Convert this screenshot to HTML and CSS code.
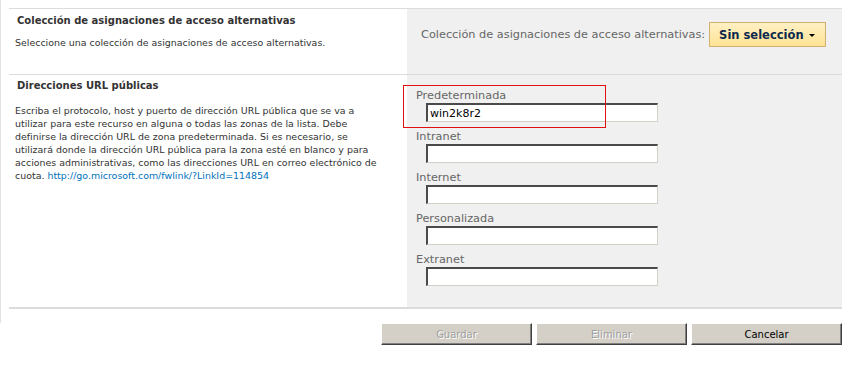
FILE: index.html
```html
<!DOCTYPE html>
<html lang="es">
<head>
  <meta charset="UTF-8">
  <title>Asignaciones de acceso alternativas</title>
  <link rel="stylesheet" href="styles.css">
</head>
<body>
  <div class="page">
    <div class="form">
      <!-- Colección -->
      <div class="section">
        <div class="desc">
          <h3>Colección de asignaciones de acceso alternativas</h3>
          <p class="first">Seleccione una colección de asignaciones de acceso alternativas.</p>
        </div>
        <div class="ctrl ctrl-top">
          <span class="ctrl-label">Colección de asignaciones de acceso alternativas:</span>
          <button class="picker">Sin selección <span class="arrow"></span></button>
        </div>
      </div>

      <!-- Direcciones URL -->
      <div class="section last">
        <div class="desc">
          <h3>Direcciones URL públicas</h3>
          <p>Escriba el protocolo, host y puerto de dirección URL pública que se va a utilizar para este recurso en alguna o todas las zonas de la lista. Debe definirse la dirección URL de zona predeterminada. Si es necesario, se utilizará donde la dirección URL pública para la zona esté en blanco y para acciones administrativas, como las direcciones URL en correo electrónico de cuota. <a href="#">http://go.microsoft.com/fwlink/?LinkId=114854</a></p>
        </div>
        <div class="ctrl fields">
          <div class="field">
            <label>Predeterminada</label>
            <input type="text" value="win2k8r2">
          </div>
          <div class="field">
            <label>Intranet</label>
            <input type="text">
          </div>
          <div class="field">
            <label>Internet</label>
            <input type="text">
          </div>
          <div class="field">
            <label>Personalizada</label>
            <input type="text">
          </div>
          <div class="field">
            <label>Extranet</label>
            <input type="text">
          </div>
        </div>
      </div>
    </div>

    <div class="actions">
      <button class="btn" disabled>Guardar</button>
      <button class="btn" disabled>Eliminar</button>
      <button class="btn">Cancelar</button>
    </div>

    <div class="highlight"></div>
  </div>
</body>
</html>
```

FILE: styles.css
```css
body {
  margin: 0;
  background-color: #fff;
  font-family: Tahoma, 'DejaVu Sans', sans-serif;
  font-size: 10px;
  color: #333;
}

.page {
  position: relative;
  width: 842px;
}

.form {
  border-left: 1px solid #e3e3e3;
  padding: 8px 0 14px 8px;
}

.section {
  display: flex;
  border-top: 1px solid #dcdcdc;
}

.section.last {
  border-bottom: 2px solid #dcdcdc;
}

.desc {
  width: 392px;
  padding: 0 0 0 6px;
}

.desc h3 {
  margin: 5px 0 0 2px;
  font-size: 10px;
  font-weight: bold;
  line-height: 14px;
  color: #333;
}

.section.last .desc h3 {
  margin-top: 4px;
}

.desc p {
  margin: 11px 0 0 0;
  font-size: 9.45px;
  line-height: 13px;
  width: 362px;
}

.desc p.first {
  margin-top: 8px;
}

.desc a {
  color: #0072bc;
  text-decoration: none;
}

.ctrl {
  flex: 1;
  background-color: #f0f0f0;
  font-family: Verdana, 'DejaVu Sans', sans-serif;
  color: #666;
  font-size: 11.3px;
}

.ctrl-top {
  display: flex;
  align-items: flex-start;
  height: 65px;
  box-sizing: border-box;
  padding: 13px 0 0 14px;
}

.ctrl-label {
  line-height: 25px;
  margin-right: 4px;
}

.picker {
  display: flex;
  align-items: center;
  gap: 5px;
  height: 25px;
  padding: 0 8px 0 9px;
  width: 117px;
  border: 1px solid #d2b170;
  background: linear-gradient(#fff0c4, #ffe395);
  font-family: Verdana, 'DejaVu Sans', sans-serif;
  font-size: 11.5px;
  font-weight: bold;
  color: #0c2a4d;
  cursor: pointer;
}

.arrow {
  width: 0;
  height: 0;
  border-left: 3px solid transparent;
  border-right: 3px solid transparent;
  border-top: 3px solid #000;
  margin-top: 2px;
}

.fields {
  padding: 13px 0 21px 9px;
}

.field {
  display: flex;
  flex-direction: column;
  margin-bottom: 7px;
}

.field:last-child {
  margin-bottom: 0;
}

.field label {
  line-height: 15px;
}

.field input {
  box-sizing: border-box;
  width: 232px;
  height: 19px;
  margin-left: 10px;
  padding: 0 2px;
  border-style: solid;
  border-width: 2px 1px 1px 2px;
  border-color: #4a4a4a #d4d0c8 #d4d0c8 #4a4a4a;
  background-color: #fff;
  font-family: Verdana, 'DejaVu Sans', sans-serif;
  font-size: 11px;
  color: #000;
}

.actions {
  display: flex;
  justify-content: flex-end;
  gap: 4px;
}

.btn {
  width: 151px;
  height: 22px;
  background-color: #d4d0c8;
  border-style: solid;
  border-width: 1px;
  border-color: #fff #404040 #404040 #fff;
  box-shadow: inset -1px -1px 0 #808080;
  font-family: Tahoma, 'DejaVu Sans', sans-serif;
  font-size: 10px;
  color: #000;
}

.btn:disabled {
  color: #a0a0a0;
  text-shadow: 1px 1px 0 #fff;
}

.highlight {
  position: absolute;
  left: 403px;
  top: 85px;
  width: 201px;
  height: 41px;
  border: 1px solid #e01010;
}
```
